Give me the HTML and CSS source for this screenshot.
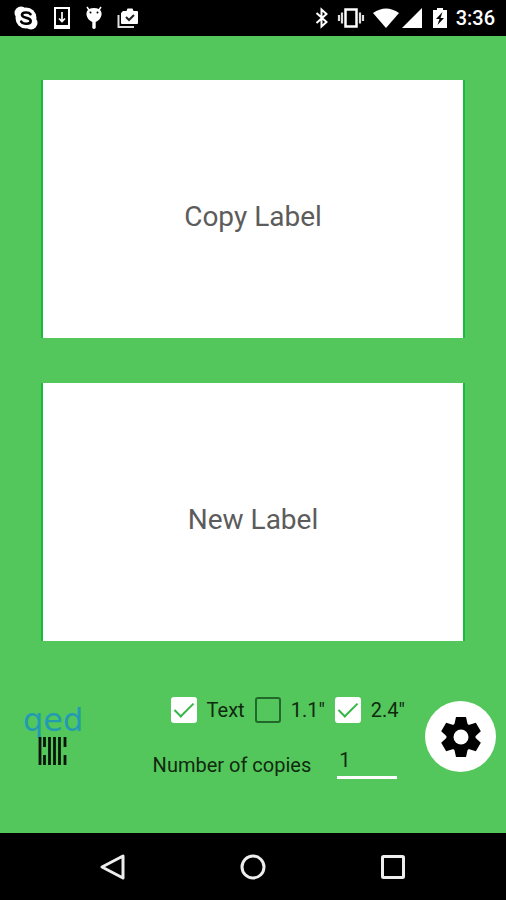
FILE: index.html
```html
<!DOCTYPE html>
<html lang="en">
<head>
<meta charset="utf-8">
<meta name="viewport" content="width=device-width, initial-scale=1">
<title>Label printer</title>
<link rel="stylesheet" href="styles.css">
</head>
<body>
<header class="status">
  <div class="status-group notices">
    <svg width="26" height="26" viewBox="0 0 26 26" aria-hidden="true"><circle cx="13" cy="13" r="10.5" fill="#fff"/><circle cx="8" cy="8" r="6.5" fill="#fff"/><circle cx="18" cy="18" r="6.5" fill="#fff"/><path d="M17.5 9.2C16 7 9 6.600 9 10c0 3.400 8.700 2 8.700 6 0 3.700-7.700 3.500-9.500.6" fill="none" stroke="#000" stroke-width="2.600" stroke-linecap="round"/></svg>
    <svg width="18" height="24" viewBox="0 0 18 24" aria-hidden="true"><path d="M1 1h16v22H1z M3 3v16h12V3z" fill="#fff" fill-rule="evenodd"/><path d="M9 6v9M6 12.500l3 3 3-3" fill="none" stroke="#fff" stroke-width="1.700"/></svg>
    <svg width="18" height="24" viewBox="0 0 18 24" aria-hidden="true"><path d="M2 1l2 3M16 1l-2 3" stroke="#fff" stroke-width="1.500"/><path d="M4 3Q9 1 14 3Q17 5 16.500 9Q15.500 14 10.700 16v6q-1.700 2-3.400 0v-6Q2.500 14 1.500 9Q1 5 4 3z" fill="#fff"/><circle cx="5.500" cy="6.500" r="1" fill="#000"/><circle cx="12.500" cy="6.500" r="1" fill="#000"/></svg>
    <svg width="22" height="22" viewBox="0 0 22 22" aria-hidden="true"><path d="M1.500 8v12H17" fill="none" stroke="#ddd" stroke-width="2"/><path d="M6 4h3.500l1-2.500h5l1 2.500H20q1 0 1 1v11q0 1-1 1H5q-1 0-1-1V6z" fill="#fff"/><path d="M9 10l3 3 5-5" fill="none" stroke="#222" stroke-width="2"/></svg>
  </div>
  <div class="status-group system">
    <svg width="14" height="22" viewBox="0 0 14 22" aria-hidden="true"><path d="M1.500 6l10 9-5 4.500v-17l5 4.500-10 9" fill="none" stroke="#fff" stroke-width="2"/></svg>
    <svg width="28" height="22" viewBox="0 0 28 22" aria-hidden="true"><rect x="8.500" y="2.500" width="11" height="17" fill="none" stroke="#fff" stroke-width="2.500"/><path d="M2 8v6M5 5.500v11M23 5.500v11M26 8v6" stroke="#ddd" stroke-width="2.200"/></svg>
    <svg class="wifi" width="26" height="22" viewBox="0 0 26 22" aria-hidden="true"><path d="M0 6Q13-3 26 6L13 21z" fill="#fff"/></svg>
    <svg width="22" height="22" viewBox="0 0 22 22" aria-hidden="true"><path d="M21 1v20H1z" fill="#fff"/></svg>
    <svg class="battery" width="14" height="22" viewBox="0 0 14 22" aria-hidden="true"><path d="M4 1h6v2h4v18H0V3h4z" fill="#fff"/><path d="M9.500 5L3 12h3.500L4.500 18 11 11H7.500z" fill="#000"/></svg>
    <time>3:36</time>
  </div>
</header>
<main class="screen">
  <button class="card" type="button">Copy Label</button>
  <button class="card" type="button">New Label</button>
  <form class="tools">
    <div class="brand">
      <span class="brand-name">qed</span>
      <svg width="30" height="30" viewBox="0 0 30 30" aria-hidden="true"><path d="M2 1v28M6.500 1v10M6.500 19v10M11.500 1v28M16.500 1v28M21.500 1v28M27 1v10M27 19v10" stroke="#0a160b" stroke-width="2.800"/></svg>
    </div>
    <div class="options">
      <div class="checks">
        <label><input type="checkbox" checked>Text</label>
        <label><input type="checkbox">1.1"</label>
        <label><input type="checkbox" checked>2.4"</label>
      </div>
      <div class="copies">
        <label for="copies">Number of copies</label>
        <input id="copies" type="text" inputmode="numeric" value="1">
      </div>
    </div>
    <button class="settings" type="button" aria-label="Settings">
      <svg width="48" height="48" viewBox="-24 -24 48 48" aria-hidden="true"><path id="tooth" d="M-7-11L-5-20H5L7-11V11L5 20H-5L-7 11z"/><use href="#tooth" transform="rotate(60)"/><use href="#tooth" transform="rotate(120)"/><circle r="14.500"/><circle r="7.500" fill="#fff"/></svg>
    </button>
  </form>
</main>
<nav class="navbar" aria-label="System">
  <button type="button" aria-label="Back"><svg width="28" height="28" viewBox="0 0 28 28"><path d="M24 3v22L3 14z"/></svg></button>
  <button type="button" aria-label="Home"><svg width="28" height="28" viewBox="0 0 28 28"><circle cx="14" cy="14" r="11"/></svg></button>
  <button type="button" aria-label="Recent apps"><svg width="28" height="28" viewBox="0 0 28 28"><rect x="3.500" y="3.500" width="21" height="21" rx="1"/></svg></button>
</nav>
</body>
</html>
```
FILE: styles.css
```css
* {
  box-sizing: border-box;
}

body {
  margin: 0;
  min-height: 100vh;
  display: flex;
  flex-direction: column;
  background: #53c75b;
  color: #10290f;
  font-family: Roboto, sans-serif;
  font-size: 20px;
}

button {
  border: 0;
  padding: 0;
  font: inherit;
}

svg {
  display: block;
  flex: none;
}

.status {
  display: flex;
  justify-content: space-between;
  align-items: center;
  height: 36px;
  padding: 0 11px 0 13px;
  background: #000;
  color: #fff;
}

.status-group {
  display: flex;
  align-items: center;
}

.notices {
  gap: 14px;
}

.system {
  gap: 8px;
}

.wifi {
  margin-right: -6px;
}

.battery {
  margin: 0 1px 0 2px;
}

.status time {
  font-weight: 500;
  line-height: 36px;
}

.screen {
  flex: 1;
  display: flex;
  flex-direction: column;
  gap: 45px;
  padding: 44px 0 0;
}

.card {
  flex: 1;
  margin: 0 41px;
  padding-top: 14px;
  border: solid #16bd3c;
  border-width: 0 2px;
  background: #fff;
  color: #5c5c5c;
  font-size: 28px;
}

.tools {
  display: flex;
  align-items: center;
  height: 147px;
  padding: 0 10px 46px 23px;
}

.brand {
  display: flex;
  flex-direction: column;
  align-items: center;
  gap: 4px;
}

.brand-name {
  color: #239bb0;
  font-family: "DejaVu Sans", sans-serif;
  font-size: 32px;
  line-height: 24px;
}

.options {
  display: flex;
  flex-direction: column;
  gap: 22px;
  margin: 2px 20px 0 auto;
}

.checks {
  display: flex;
  gap: 10px;
  padding-left: 18px;
}

.checks label {
  display: flex;
  align-items: center;
  gap: 10px;
}

.checks input {
  appearance: none;
  display: flex;
  justify-content: center;
  width: 26px;
  height: 26px;
  margin: 0;
  border: 2px solid #22682b;
  border-radius: 3px;
}

.checks input:checked {
  border-color: #fff;
  background: #fff;
}

.checks input:checked::before {
  content: "";
  width: 8px;
  height: 17px;
  border: solid #36b648;
  border-width: 0 2px 2px 0;
  transform: translateY(-1px) rotate(45deg);
}

.copies {
  display: flex;
  align-items: flex-end;
  gap: 26px;
}

.copies label {
  line-height: 28px;
}

.copies input {
  width: 60px;
  height: 34px;
  padding: 0 2px;
  border: 0;
  border-bottom: 3px solid #fff;
  border-radius: 0;
  background: transparent;
  color: inherit;
  font: inherit;
}

.settings {
  display: grid;
  place-items: center;
  width: 71px;
  height: 71px;
  border-radius: 50%;
  background: #fff;
}

.navbar {
  display: flex;
  justify-content: center;
  gap: 112px;
  height: 67px;
  background: #000;
}

.navbar button {
  background: none;
}

.navbar svg {
  fill: none;
  stroke: #eee;
  stroke-width: 3;
  stroke-linejoin: round;
}
```
